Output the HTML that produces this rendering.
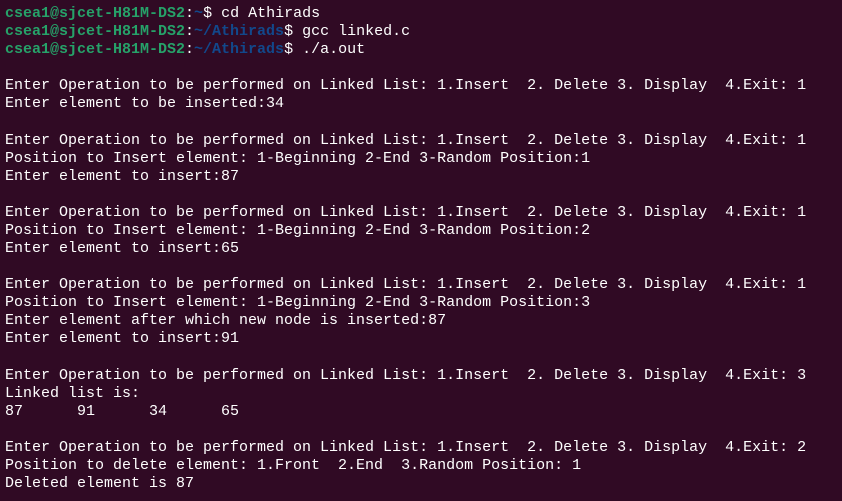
<!DOCTYPE html>
<html><head><meta charset="utf-8"><style>
html,body{margin:0;padding:0;width:842px;height:501px;overflow:hidden;background:#300a24;}
pre{margin:0;padding:5px 0 0 5px;font-family:"Liberation Mono",monospace;font-size:15px;line-height:18.08px;color:#ffffff;white-space:pre;}
.g{color:#26a269;font-weight:bold}.b{color:#12488b;font-weight:bold}
</style></head><body><pre><span class="g">csea1@sjcet-H81M-DS2</span>:<span class="b">~</span>$ cd Athirads
<span class="g">csea1@sjcet-H81M-DS2</span>:<span class="b">~/Athirads</span>$ gcc linked.c
<span class="g">csea1@sjcet-H81M-DS2</span>:<span class="b">~/Athirads</span>$ ./a.out

Enter Operation to be performed on Linked List: 1.Insert  2. Delete 3. Display  4.Exit: 1
Enter element to be inserted:34

Enter Operation to be performed on Linked List: 1.Insert  2. Delete 3. Display  4.Exit: 1
Position to Insert element: 1-Beginning 2-End 3-Random Position:1
Enter element to insert:87

Enter Operation to be performed on Linked List: 1.Insert  2. Delete 3. Display  4.Exit: 1
Position to Insert element: 1-Beginning 2-End 3-Random Position:2
Enter element to insert:65

Enter Operation to be performed on Linked List: 1.Insert  2. Delete 3. Display  4.Exit: 1
Position to Insert element: 1-Beginning 2-End 3-Random Position:3
Enter element after which new node is inserted:87
Enter element to insert:91

Enter Operation to be performed on Linked List: 1.Insert  2. Delete 3. Display  4.Exit: 3
Linked list is:
87      91      34      65

Enter Operation to be performed on Linked List: 1.Insert  2. Delete 3. Display  4.Exit: 2
Position to delete element: 1.Front  2.End  3.Random Position: 1
Deleted element is 87
</pre></body></html>
